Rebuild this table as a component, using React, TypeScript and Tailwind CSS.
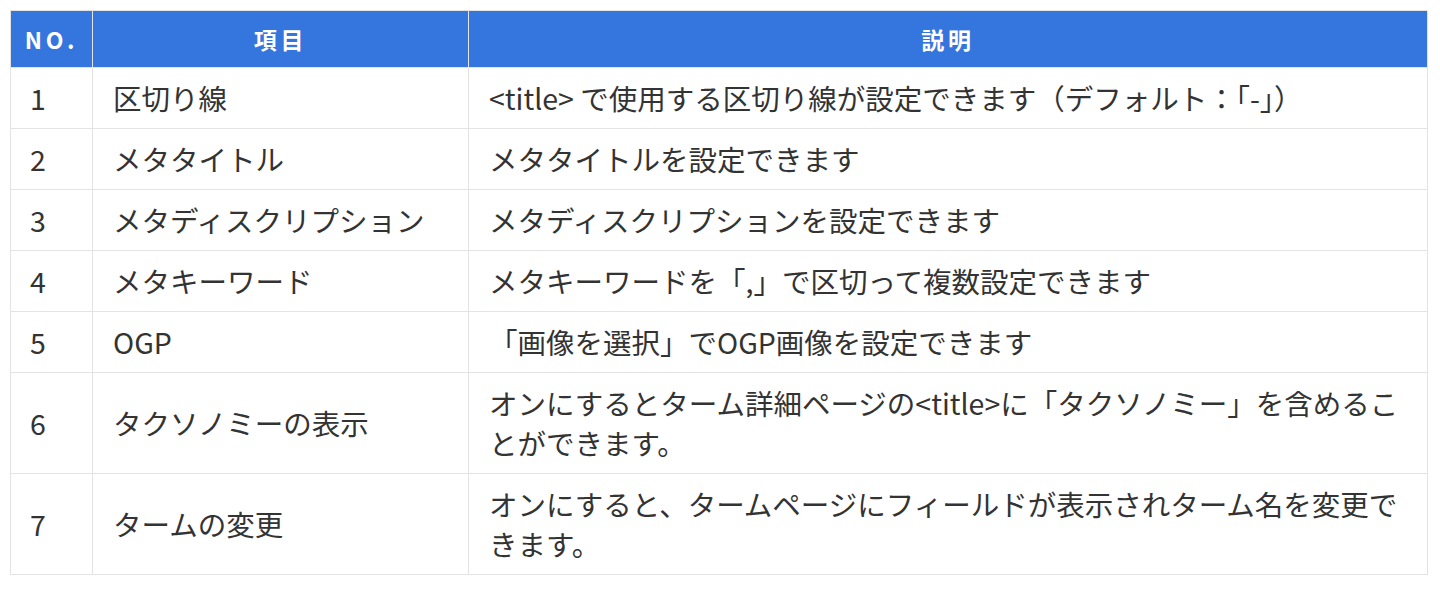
import React from "react";

const rows: { no: string; item: string; desc: string }[] = [
  { no: "1", item: "区切り線", desc: "<title> で使用する区切り線が設定できます（デフォルト：「-」）" },
  { no: "2", item: "メタタイトル", desc: "メタタイトルを設定できます" },
  { no: "3", item: "メタディスクリプション", desc: "メタディスクリプションを設定できます" },
  { no: "4", item: "メタキーワード", desc: "メタキーワードを「,」で区切って複数設定できます" },
  { no: "5", item: "OGP", desc: "「画像を選択」でOGP画像を設定できます" },
  { no: "6", item: "タクソノミーの表示", desc: "オンにするとターム詳細ページの<title>に「タクソノミー」を含めることができます。" },
  { no: "7", item: "タームの変更", desc: "オンにすると、タームページにフィールドが表示されターム名を変更できます。" },
];

export default function App() {
  return (
    <div
      className="bg-white w-[1440px] h-[589px] pl-[10px] pt-[10px]"
      style={{ fontFamily: '"Noto Sans CJK JP", "Noto Sans", sans-serif' }}
    >
      <table className="w-[1418px] border-collapse table-fixed text-[#333333]">
        <colgroup>
          <col className="w-[82px]" />
          <col className="w-[376px]" />
          <col />
        </colgroup>
        <thead>
          <tr className="bg-[#3575de] h-[57px]">
            <th className="border border-[#e3e3e3] text-white font-bold text-[23px] tracking-[0.16em] text-center">NO.</th>
            <th className="border border-[#e3e3e3] text-white font-bold text-[23px] tracking-[0.16em] text-center">項目</th>
            <th className="border border-[#e3e3e3] text-white font-bold text-[23px] tracking-[0.16em] text-center">説明</th>
          </tr>
        </thead>
        <tbody>
          {rows.map((r) => (
            <tr key={r.no}>
              <td className="border border-[#e3e3e3] px-[19px] py-[10px] text-[28.5px] leading-[40px] align-middle">{r.no}</td>
              <td className="border border-[#e3e3e3] px-[20px] py-[10px] text-[28.5px] leading-[40px] align-middle">{r.item}</td>
              <td className="border border-[#e3e3e3] px-[20px] py-[10px] text-[28.5px] leading-[40px] align-middle">{r.desc}</td>
            </tr>
          ))}
        </tbody>
      </table>
    </div>
  );
}
